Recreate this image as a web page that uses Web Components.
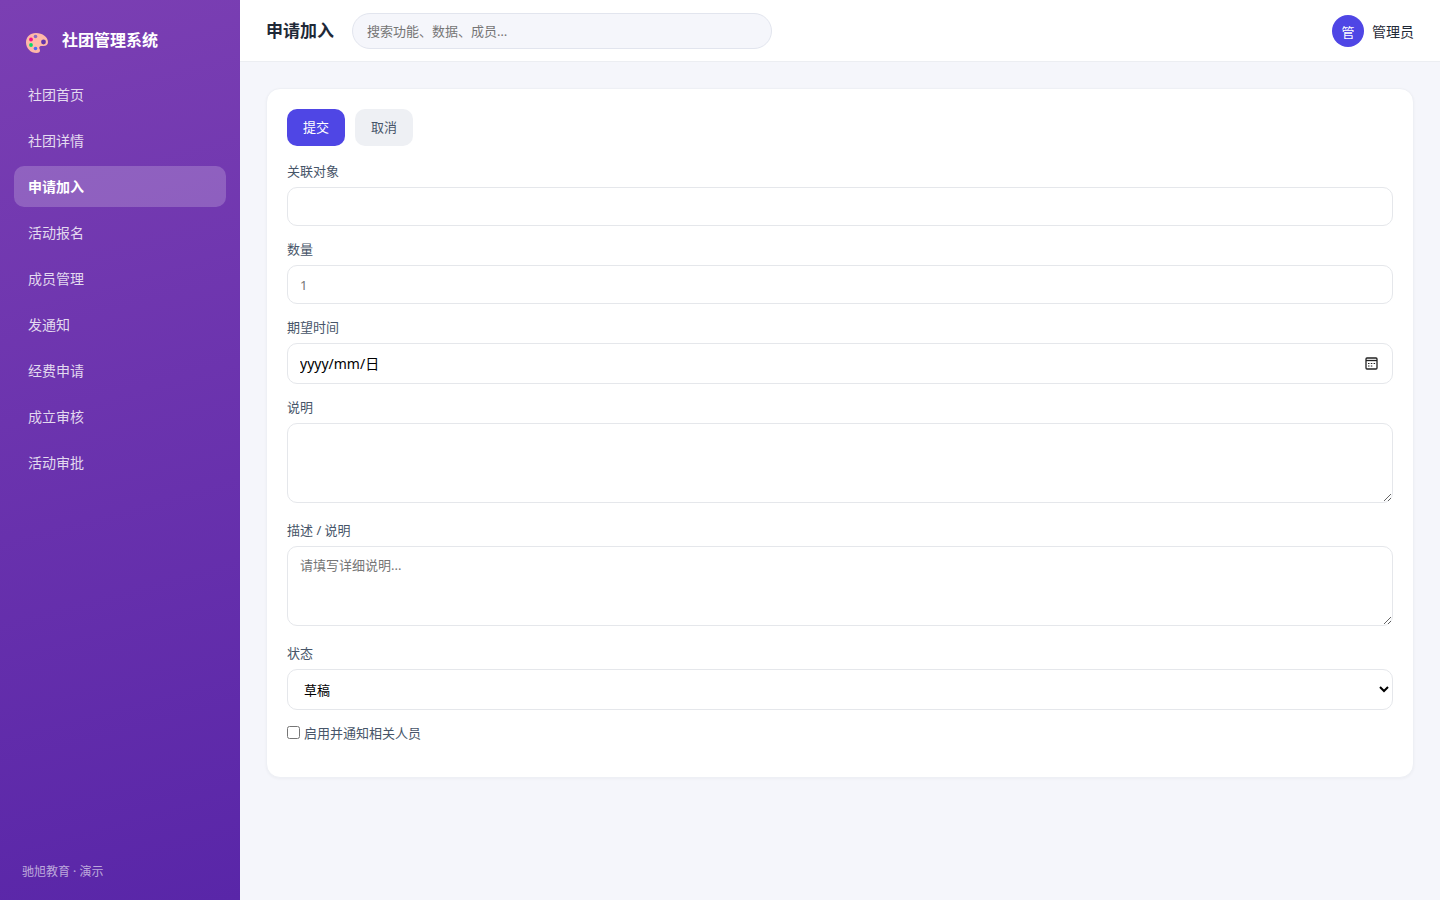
<!DOCTYPE html>
<html lang="zh-CN">
<head>
<meta charset="UTF-8">
<meta name="viewport" content="width=device-width, initial-scale=1.0">
<title>申请加入 - 社团管理系统</title>
<style>
body {
    margin: 0;
    background-color: #f5f6fb;
    color: #1f2937;
    font-family: "Noto Sans", "Noto Sans CJK SC", sans-serif;
    font-size: 14px;
    --primary: #4f46e5;
    --line: #e5e7eb;
    --muted: #475569;
}
</style>
</head>
<body>

<app-layout>
    <side-bar slot="side" brand="社团管理系统" footer="驰旭教育 · 演示">
        <nav-item text="社团首页"></nav-item>
        <nav-item text="社团详情"></nav-item>
        <nav-item text="申请加入" active></nav-item>
        <nav-item text="活动报名"></nav-item>
        <nav-item text="成员管理"></nav-item>
        <nav-item text="发通知"></nav-item>
        <nav-item text="经费申请"></nav-item>
        <nav-item text="成立审核"></nav-item>
        <nav-item text="活动审批"></nav-item>
    </side-bar>
    <top-bar slot="top" heading="申请加入" user="管理员"></top-bar>
    <form-card>
        <action-button slot="actions" kind="primary">提交</action-button>
        <action-button slot="actions">取消</action-button>
        <form-field label="关联对象"></form-field>
        <form-field label="数量" placeholder="1"></form-field>
        <form-field label="期望时间" type="date" placeholder="yyyy/mm/日"></form-field>
        <form-field label="说明" type="textarea"></form-field>
        <form-field label="描述 / 说明" type="textarea" placeholder="请填写详细说明..."></form-field>
        <form-field label="状态" type="select" options="草稿,已提交,已通过"></form-field>
        <form-field label="启用并通知相关人员" type="checkbox"></form-field>
    </form-card>
</app-layout>

<script>
class AppLayout extends HTMLElement {
    constructor(){
        super();
        this._sR = this.attachShadow({mode:'open'});
        this._sR.innerHTML = `
<style>
:host {
    display: grid;
    grid-template-columns: 240px minmax(0, 1fr);
    min-height: 100vh;
}
.content {
    display: flex;
    flex-direction: column;
}
main {
    padding: 26px;
}
</style>
<slot name="side"></slot>
<div class="content">
    <slot name="top"></slot>
    <main><slot></slot></main>
</div>`;
    }
}

class SideBar extends HTMLElement {
    constructor(){
        super();
        this._sR = this.attachShadow({mode:'open'});
        this._sR.innerHTML = `
<style>
:host {
    display: flex;
    flex-direction: column;
    background: linear-gradient(165deg, #7b3fb3, #5926a8);
    color: #fff;
}
.brand {
    display: flex;
    align-items: center;
    gap: 12px;
    padding: 26px 24px 16px;
    height: 32px;
    font-size: 16px;
    font-weight: 700;
    line-height: 28px;
}
.brand svg {
    width: 26px;
    height: 26px;
    margin-top: 4px;
}
.brand span {
    margin-bottom: 4px;
}
nav {
    display: flex;
    flex-direction: column;
    gap: 5px;
    padding: 0 14px;
    flex: 1;
}
footer {
    padding: 19px 22px;
    font-size: 12px;
    line-height: 18px;
    color: rgba(255, 255, 255, 0.6);
}
</style>
<div class="brand">
    <svg viewBox="0 0 26 26" aria-hidden="true">
        <path fill="#ffb8a8" d="M12 2C6 2 2 6 2 11.500c0 5.500 4.500 10.500 10.500 10.500 2.500 0 3.500-1 3.500-2.500 0-1.200-.8-1.700-.8-2.700 0-1.200 1-1.800 2.600-1.800h1.700c2.800 0 4.500-1.500 4.500-4C24 6 18.500 2 12 2z"/>
        <circle cx="19.500" cy="11" r="2.400" fill="#6236ab"/>
        <circle cx="11.500" cy="5.500" r="1.800" fill="#8a68c5"/>
        <circle cx="7" cy="8.500" r="1.900" fill="#f5128a"/>
        <circle cx="7" cy="14" r="1.900" fill="#0bd66b"/>
        <circle cx="11.500" cy="17.500" r="1.800" fill="#4a6cf7"/>
    </svg>
    <span class="name"></span>
</div>
<nav><slot></slot></nav>
<footer></footer>`;
    }

    connectedCallback() {
        this._sR.querySelector('.name').textContent = this.getAttribute('brand');
        this._sR.querySelector('footer').textContent = this.getAttribute('footer');
    }
}

class NavItem extends HTMLElement {
    constructor(){
        super();
        this._sR = this.attachShadow({mode:'open'});
        this._sR.innerHTML = `
<style>
:host {
    display: block;
}
a {
    display: block;
    padding: 10px 14px;
    border-radius: 10px;
    line-height: 21px;
    color: rgba(255, 255, 255, 0.82);
    text-decoration: none;
}
a:hover {
    background-color: rgba(255, 255, 255, 0.1);
}
:host([active]) a {
    background-color: rgba(255, 255, 255, 0.2);
    color: #fff;
    font-weight: 700;
}
</style>
<a href="#"></a>`;
    }

    connectedCallback() {
        this._sR.querySelector('a').textContent = this.getAttribute('text');
    }
}

class TopBar extends HTMLElement {
    constructor(){
        super();
        this._sR = this.attachShadow({mode:'open'});
        this._sR.innerHTML = `
<style>
:host {
    display: flex;
    align-items: center;
    gap: 18px;
    padding: 13px 26px 12px;
    background-color: #fff;
    border-bottom: 1px solid #eceef2;
}
h1 {
    margin: 0;
    font-size: 17px;
    line-height: 24px;
    white-space: nowrap;
}
input {
    box-sizing: border-box;
    flex: 0 1 420px;
    min-width: 0;
    height: 36px;
    padding: 0 14px;
    border: 1px solid #e2e5ee;
    border-radius: 18px;
    background-color: #f5f6fb;
    font-family: inherit;
    font-size: 13px;
}
input::placeholder {
    color: #757575;
}
.user {
    display: flex;
    align-items: center;
    gap: 8px;
    margin-left: auto;
}
.avatar {
    display: flex;
    justify-content: center;
    align-items: center;
    width: 32px;
    height: 32px;
    border-radius: 50%;
    background-color: var(--primary);
    color: #fff;
    font-size: 13px;
}
</style>
<h1></h1>
<input type="search" placeholder="搜索功能、数据、成员…" aria-label="搜索">
<div class="user">
    <span class="avatar"></span>
    <span class="name"></span>
</div>`;
    }

    connectedCallback() {
        const user = this.getAttribute('user');
        this._sR.querySelector('h1').textContent = this.getAttribute('heading');
        this._sR.querySelector('.avatar').textContent = user.charAt(0);
        this._sR.querySelector('.name').textContent = user;
    }
}

class FormCard extends HTMLElement {
    constructor(){
        super();
        this._sR = this.attachShadow({mode:'open'});
        this._sR.innerHTML = `
<style>
:host {
    display: block;
    padding: 20px;
    border: 1px solid #eef0f5;
    border-radius: 14px;
    background-color: #fff;
    box-shadow: 0 1px 3px rgba(15, 23, 42, 0.04);
}
.actions {
    display: flex;
    gap: 10px;
    margin-bottom: 16px;
}
</style>
<div class="actions"><slot name="actions"></slot></div>
<slot></slot>`;
    }
}

class ActionButton extends HTMLElement {
    constructor(){
        super();
        this._sR = this.attachShadow({mode:'open'});
        this._sR.innerHTML = `
<style>
:host {
    display: block;
}
button {
    display: block;
    padding: 9px 16px;
    border: 0;
    border-radius: 10px;
    background-color: #eef0f4;
    color: var(--muted);
    font-family: inherit;
    font-size: 13px;
    line-height: 19px;
    cursor: pointer;
}
:host([kind="primary"]) button {
    background-color: var(--primary);
    color: #fff;
}
</style>
<button type="button"><slot></slot></button>`;
    }
}

class FormField extends HTMLElement {
    constructor(){
        super();
        this._sR = this.attachShadow({mode:'open'});
    }

    connectedCallback() {
        this.render();
    }

    control() {
        const hint = this.getAttribute('placeholder') || '';
        switch (this.getAttribute('type')) {
            case 'textarea':
                return `<textarea id="control" placeholder="${hint}"></textarea>`;
            case 'select':
                return `<select id="control">${this.getAttribute('options').split(',').map(o => `<option>${o}</option>`).join('')}</select>`;
            case 'checkbox':
                return `<input id="control" type="checkbox">`;
            case 'date':
                return `
<div class="date">
    <input id="control" type="text" placeholder="${hint}">
    <button type="button" aria-label="选择日期">
        <svg viewBox="0 0 13 13" fill="none" stroke="#222" aria-hidden="true">
            <rect x="1" y="1" width="11" height="11" rx="1" stroke-width="1.300"/>
            <path d="M1 3.500h11" stroke-width="1.300"/>
            <path d="M3 6.500h1.500M5.800 6.500h1.500M8.600 6.500h1.500M3 9h1.500M5.800 9h1.500"/>
        </svg>
    </button>
</div>`;
            default:
                return `<input id="control" type="text" placeholder="${hint}">`;
        }
    }

    render() {
        this._sR.innerHTML = `
<style>
:host {
    display: block;
    margin-bottom: 14px;
}
:host([type="textarea"]) {
    margin-bottom: 18px;
}
label {
    display: block;
    margin-bottom: 6px;
    color: var(--muted);
    font-size: 13px;
    line-height: 19px;
}
input, textarea, select, .date {
    display: block;
    box-sizing: border-box;
    width: 100%;
    height: 39px;
    margin: 0;
    padding: 8px 12px;
    border: 1px solid var(--line);
    border-radius: 10px;
    background-color: #fff;
    color: #000;
    font-family: inherit;
    font-size: 13px;
    line-height: 21px;
}
::placeholder {
    color: #757575;
}
textarea {
    height: 80px;
}
select {
    height: 41px;
}
.date {
    display: flex;
    align-items: center;
    height: 41px;
    padding-right: 14px;
}
.date input {
    flex: 1;
    height: auto;
    padding: 0;
    border: 0;
    border-radius: 0;
    font-size: 14px;
}
.date ::placeholder {
    color: #000;
}
.date button {
    width: 13px;
    height: 13px;
    padding: 0;
    border: 0;
    background: none;
}
svg {
    display: block;
}
/* the tick box stands before its label */
:host([type="checkbox"]) {
    display: flex;
    flex-direction: row-reverse;
    justify-content: flex-end;
    gap: 4px;
}
:host([type="checkbox"]) label {
    margin: 0;
}
:host([type="checkbox"]) input {
    width: 13px;
    height: 13px;
    margin-top: 2px;
}
</style>
<label for="control">${this.getAttribute('label')}</label>
${this.control()}`;
    }
}

window.customElements.define('app-layout', AppLayout);
window.customElements.define('side-bar', SideBar);
window.customElements.define('nav-item', NavItem);
window.customElements.define('top-bar', TopBar);
window.customElements.define('form-card', FormCard);
window.customElements.define('action-button', ActionButton);
window.customElements.define('form-field', FormField);
</script>
</body>
</html>
